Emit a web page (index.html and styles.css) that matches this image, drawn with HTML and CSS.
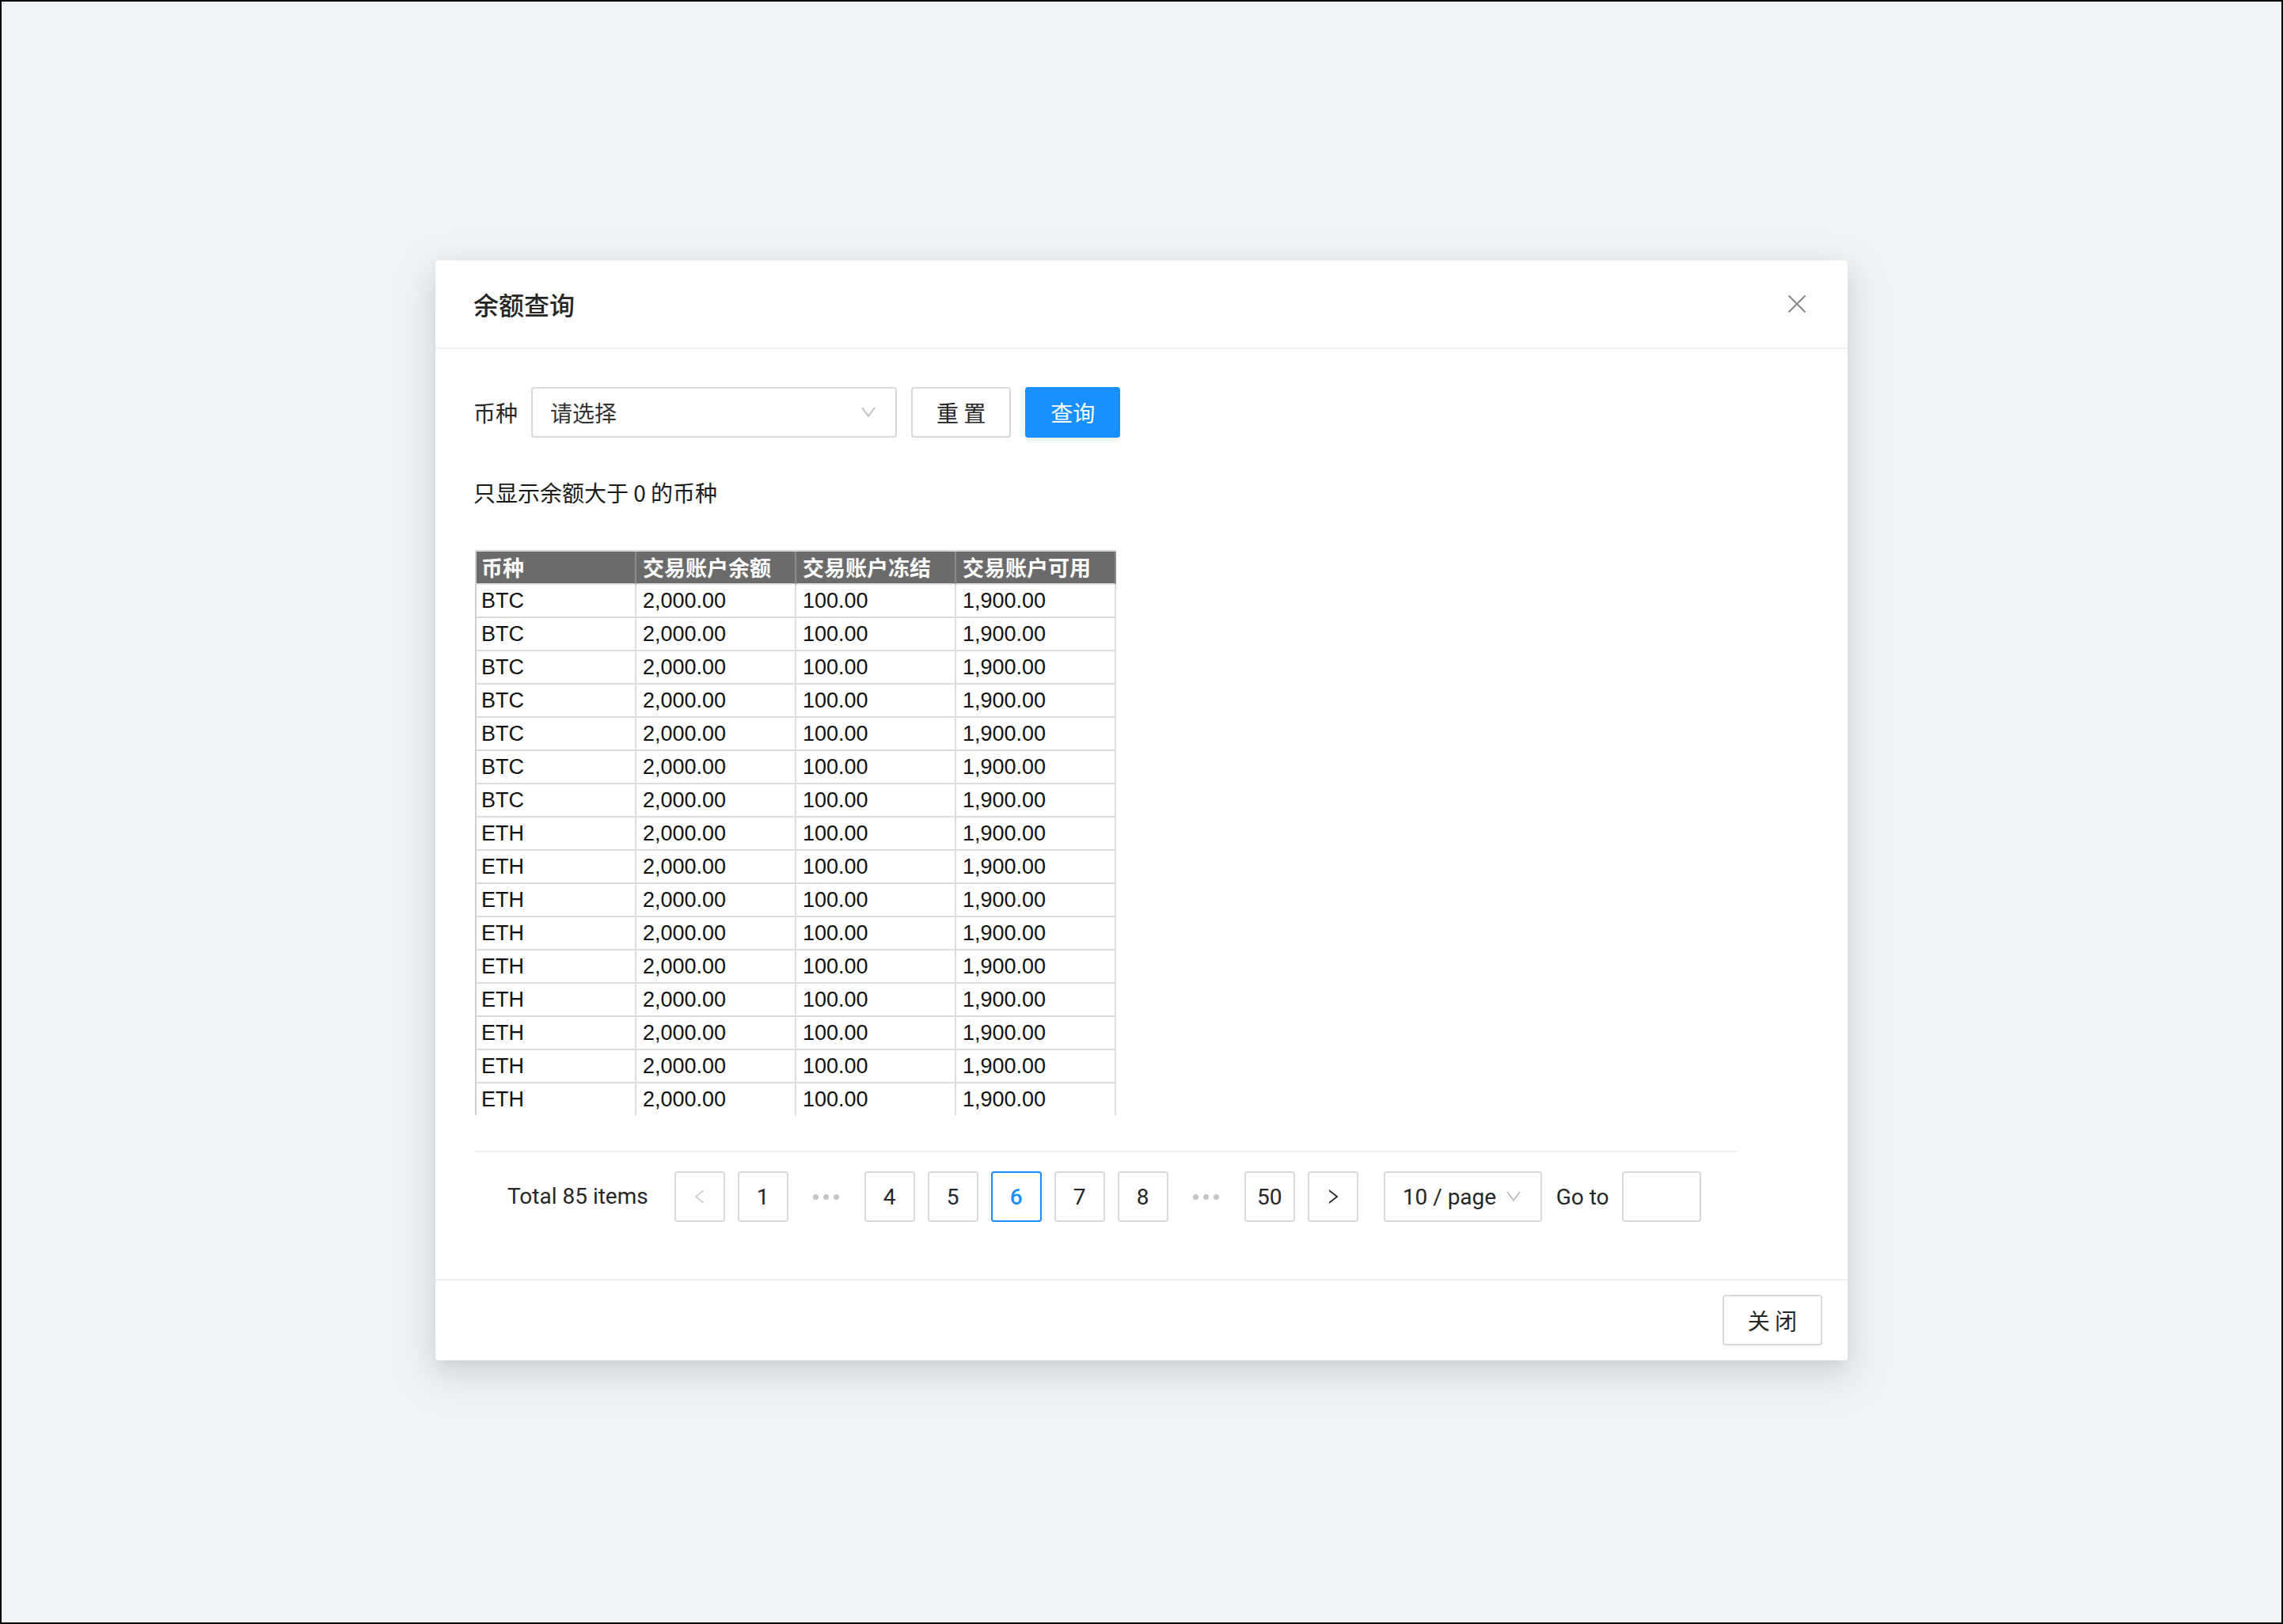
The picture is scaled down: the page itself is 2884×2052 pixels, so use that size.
FILE: index.html
```html
<!DOCTYPE html>
<html lang="zh-CN">
<head>
<meta charset="utf-8">
<title>余额查询</title>
<link rel="stylesheet" href="styles.css">
</head>
<body>
<div class="screen">
  <div class="modal">
    <div class="modal-header">
      <div class="modal-title">余额查询</div>
      <button class="modal-close" aria-label="close">
        <svg width="24" height="24" viewBox="0 0 24 24"><path d="M1.5 1.5L22.5 22.5M22.5 1.5L1.5 22.5" stroke="#8c8c8c" stroke-width="2.2" fill="none"/></svg>
      </button>
    </div>
    <div class="modal-body">
      <div class="search-row">
        <span class="field-label">币种</span>
        <div class="select">
          <span class="select-placeholder">请选择</span>
          <svg class="select-arrow" width="24" height="24" viewBox="0 0 1024 1024"><path fill="#bfbfbf" d="M884 256h-75c-5.1 0-9.9 2.5-12.9 6.6L512 654.2 227.9 262.6c-3-4.1-7.8-6.6-12.9-6.6h-75c-6.5 0-10.3 7.4-6.5 12.7l352.6 486.1c12.8 17.6 39 17.6 51.7 0l352.6-486.1c3.9-5.3.1-12.7-6.4-12.7z"/></svg>
        </div>
        <button class="btn">重 置</button>
        <button class="btn btn-primary">查询</button>
      </div>
      <p class="note">只显示余额大于 0 的币种</p>
      <div class="sheet">
        <table class="grid">
          <thead>
            <tr><th>币种</th><th>交易账户余额</th><th>交易账户冻结</th><th>交易账户可用</th></tr>
          </thead>
          <tbody>
            <tr><td>BTC</td><td>2,000.00</td><td>100.00</td><td>1,900.00</td></tr>
            <tr><td>BTC</td><td>2,000.00</td><td>100.00</td><td>1,900.00</td></tr>
            <tr><td>BTC</td><td>2,000.00</td><td>100.00</td><td>1,900.00</td></tr>
            <tr><td>BTC</td><td>2,000.00</td><td>100.00</td><td>1,900.00</td></tr>
            <tr><td>BTC</td><td>2,000.00</td><td>100.00</td><td>1,900.00</td></tr>
            <tr><td>BTC</td><td>2,000.00</td><td>100.00</td><td>1,900.00</td></tr>
            <tr><td>BTC</td><td>2,000.00</td><td>100.00</td><td>1,900.00</td></tr>
            <tr><td>ETH</td><td>2,000.00</td><td>100.00</td><td>1,900.00</td></tr>
            <tr><td>ETH</td><td>2,000.00</td><td>100.00</td><td>1,900.00</td></tr>
            <tr><td>ETH</td><td>2,000.00</td><td>100.00</td><td>1,900.00</td></tr>
            <tr><td>ETH</td><td>2,000.00</td><td>100.00</td><td>1,900.00</td></tr>
            <tr><td>ETH</td><td>2,000.00</td><td>100.00</td><td>1,900.00</td></tr>
            <tr><td>ETH</td><td>2,000.00</td><td>100.00</td><td>1,900.00</td></tr>
            <tr><td>ETH</td><td>2,000.00</td><td>100.00</td><td>1,900.00</td></tr>
            <tr><td>ETH</td><td>2,000.00</td><td>100.00</td><td>1,900.00</td></tr>
            <tr><td>ETH</td><td>2,000.00</td><td>100.00</td><td>1,900.00</td></tr>
          </tbody>
        </table>
      </div>
      <div class="pager">
        <span class="pager-total">Total 85 items</span>
        <span class="pg-item pg-disabled">
          <svg width="24" height="24" viewBox="0 0 1024 1024"><path fill="#cfcfcf" d="M724 218.3V141c0-6.7-7.7-10.4-12.9-6.3L260.3 486.8a31.86 31.86 0 000 50.3l450.8 352.1c5.3 4.1 12.9.4 12.9-6.3v-77.3c0-4.9-2.3-9.6-6.1-12.6l-360-281 360-281.1c3.8-3 6.1-7.7 6.1-12.6z"/></svg>
        </span>
        <span class="pg-item">1</span>
        <span class="pg-jump"><i></i><i></i><i></i></span>
        <span class="pg-item">4</span>
        <span class="pg-item">5</span>
        <span class="pg-item pg-active">6</span>
        <span class="pg-item">7</span>
        <span class="pg-item">8</span>
        <span class="pg-jump"><i></i><i></i><i></i></span>
        <span class="pg-item">50</span>
        <span class="pg-item">
          <svg width="24" height="24" viewBox="0 0 1024 1024"><path fill="#262626" d="M765.7 486.8L314.9 134.7A7.970 7.970 0 00302 141v77.3c0 4.9 2.3 9.6 6.1 12.6l360 281.1-360 281.1c-3.9 3-6.1 7.700-6.1 12.6V883c0 6.7 7.7 10.4 12.9 6.3l450.8-352.1a31.96 31.96 0 000-50.4z"/></svg>
        </span>
        <div class="pg-size">
          <span>10 / page</span>
          <svg width="24" height="24" viewBox="0 0 1024 1024"><path fill="#bfbfbf" d="M884 256h-75c-5.1 0-9.9 2.5-12.9 6.6L512 654.2 227.9 262.6c-3-4.1-7.8-6.6-12.9-6.6h-75c-6.5 0-10.3 7.4-6.5 12.7l352.6 486.1c12.8 17.6 39 17.6 51.7 0l352.6-486.1c3.9-5.3.1-12.7-6.4-12.7z"/></svg>
        </div>
        <span class="pg-goto">Go to</span>
        <span class="pg-input"></span>
      </div>
    </div>
    <div class="modal-footer">
      <button class="btn">关 闭</button>
    </div>
  </div>
</div>
</body>
</html>
```

FILE: styles.css
```css
html, body {
  margin: 0;
  padding: 0;
}

.screen {
  width: 2884px;
  height: 2052px;
  box-sizing: border-box;
  border: 2px solid #000;
  background: #f0f3f6;
  display: flex;
  justify-content: center;
  align-items: flex-start;
  padding-top: 327px;
  font-family: Roboto, "Noto Sans CJK SC", sans-serif;
  font-size: 28px;
  color: #262626;
}

.modal {
  width: 1784px;
  background: #fff;
  border-radius: 4px;
  position: relative;
  box-shadow: 0 6px 12px -8px rgba(0, 0, 0, 0.12),
              0 12px 32px 0 rgba(0, 0, 0, 0.08),
              0 18px 56px 16px rgba(0, 0, 0, 0.05);
}

.modal-header {
  padding: 33px 48px 33px;
  border-bottom: 2px solid #f0f0f0;
}

.modal-title {
  font-family: "Noto Sans CJK SC", sans-serif;
  font-size: 32px;
  line-height: 44px;
  font-weight: 500;
  color: #262626;
}

.modal-close {
  position: absolute;
  top: 0;
  right: 0;
  width: 128px;
  height: 110px;
  padding: 0;
  border: 0;
  background: transparent;
  display: flex;
  align-items: center;
  justify-content: center;
}

.modal-body {
  padding: 48px;
}

.search-row {
  display: flex;
  align-items: center;
  height: 64px;
}

.field-label {
  font-family: "Noto Sans CJK SC", sans-serif;
  font-size: 28px;
  line-height: 44px;
  margin-right: 17px;
}

.select {
  width: 462px;
  height: 64px;
  box-sizing: border-box;
  border: 2px solid #d9d9d9;
  border-radius: 4px;
  padding: 0 22px;
  display: flex;
  align-items: center;
  justify-content: space-between;
  margin-right: 18px;
}

.select-placeholder {
  font-family: "Noto Sans CJK SC", sans-serif;
  font-size: 28px;
  color: #333;
}

.btn {
  height: 64px;
  box-sizing: border-box;
  padding: 8px 30px;
  border: 2px solid #d9d9d9;
  border-radius: 4px;
  background: #fff;
  font-family: "Noto Sans CJK SC", sans-serif;
  font-size: 28px;
  line-height: 44px;
  color: #262626;
  box-shadow: 0 4px 0 rgba(0, 0, 0, 0.015);
}

.btn-primary {
  margin-left: 18px;
  background: #1890ff;
  border-color: #1890ff;
  color: #fff;
  box-shadow: 0 4px 0 rgba(0, 0, 0, 0.045);
}

.note {
  margin: 47px 0 0;
  font-family: "Noto Sans CJK SC", sans-serif;
  font-size: 28px;
  line-height: 44px;
  color: #1a1a1a;
}

.sheet {
  margin-top: 51px;
  margin-left: 2px;
  height: 714px;
  overflow: hidden;
  width: 812px;
}

.grid {
  border-collapse: separate;
  border-spacing: 0;
  table-layout: fixed;
  width: 810px;
  border-left: 2px solid #cfcfcf;
  border-top: 2px solid #d6d6d6;
  font-family: "Liberation Sans", Arial, sans-serif;
  font-size: 27px;
}

.grid th,
.grid td {
  width: 184px;
  padding: 0 8px;
  line-height: 40px;
  text-align: left;
  white-space: nowrap;
  overflow: hidden;
  border-right: 2px solid #dcdcdc;
  border-bottom: 2px solid #dcdcdc;
}

.grid th {
  background: #6b6b6b;
  color: #fff;
  font-family: "Noto Sans CJK SC", sans-serif;
  font-weight: 700;
  font-size: 27px;
  border-right-color: #8a8a8a;
  border-bottom-color: #e4e4e4;
}

.grid td {
  color: #111;
}

.grid td:first-child,
.grid th:first-child {
  padding-left: 6px;
  padding-right: 10px;
}

.pager {
  width: 1596px;
  box-sizing: border-box;
  margin-top: 45px;
  margin-left: 2px;
  border-top: 2px solid #f0f0f0;
  padding: 24px 0 24px 41px;
  display: flex;
  align-items: center;
  font-family: Roboto, sans-serif;
  font-size: 28px;
  color: #262626;
}

.pager-total {
  margin-right: 33px;
  line-height: 64px;
}

.pg-item {
  width: 64px;
  height: 64px;
  box-sizing: border-box;
  border: 2px solid #d9d9d9;
  border-radius: 4px;
  margin-right: 16px;
  display: flex;
  align-items: center;
  justify-content: center;
  background: #fff;
}

.pg-active {
  border-color: #1890ff;
  color: #1890ff;
  font-weight: 500;
}

.pg-jump {
  width: 64px;
  height: 64px;
  margin-right: 16px;
  display: flex;
  align-items: center;
  justify-content: center;
  gap: 6px;
}

.pg-jump i {
  width: 7px;
  height: 7px;
  border-radius: 50%;
  background: #c4c4c4;
}

.pg-size {
  margin-left: 16px;
  width: 200px;
  height: 64px;
  box-sizing: border-box;
  border: 2px solid #d9d9d9;
  border-radius: 4px;
  padding: 0 22px;
  display: flex;
  align-items: center;
  justify-content: space-between;
}

.pg-goto {
  margin-left: 18px;
}

.pg-input {
  margin-left: 16px;
  width: 100px;
  height: 64px;
  box-sizing: border-box;
  border: 2px solid #d9d9d9;
  border-radius: 4px;
}

.modal-footer {
  border-top: 2px solid #f0f0f0;
  padding: 18px 32px 19px;
  display: flex;
  justify-content: flex-end;
}
```
